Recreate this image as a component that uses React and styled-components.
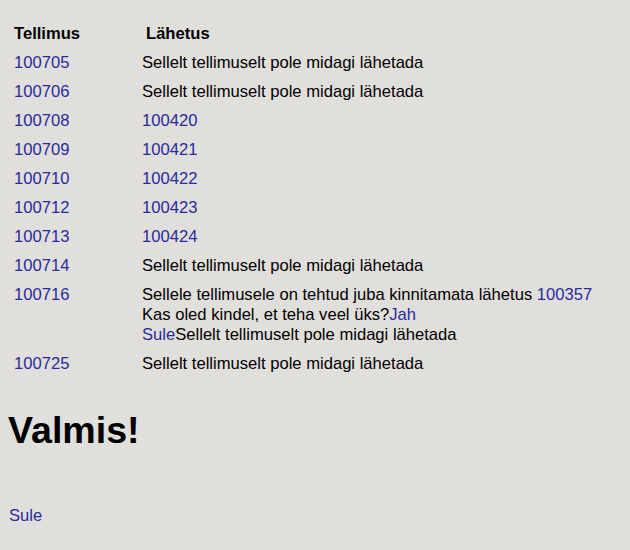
import styled, { createGlobalStyle } from 'styled-components';

const GlobalStyle = createGlobalStyle`
	body {
		margin: 0;
		background: #e0dfdc;
		font-family: 'Liberation Sans', Arial, sans-serif;
		font-size: 16.6px;
		color: #000;
	}
`;

const rows = [
	{ id: '100705', text: 'Sellelt tellimuselt pole midagi lähetada' },
	{ id: '100706', text: 'Sellelt tellimuselt pole midagi lähetada' },
	{ id: '100708', link: '100420' },
	{ id: '100709', link: '100421' },
	{ id: '100710', link: '100422' },
	{ id: '100712', link: '100423' },
	{ id: '100713', link: '100424' },
	{ id: '100714', text: 'Sellelt tellimuselt pole midagi lähetada' },
	{ id: '100716', confirm: true },
	{ id: '100725', text: 'Sellelt tellimuselt pole midagi lähetada' },
];

const App = () => {
	return (
		<Page>
			<GlobalStyle />
			<Table>
				<thead>
					<tr>
						<Th>Tellimus</Th>
						<Th $shift>Lähetus</Th>
					</tr>
				</thead>
				<tbody>
					{rows.map((r) => (
						<tr key={r.id}>
							<Td $first>
								<Link href="#">{r.id}</Link>
							</Td>
							<Td>
								{r.link && <Link href="#">{r.link}</Link>}
								{r.text}
								{r.confirm && (
									<>
										Sellele tellimusele on tehtud juba kinnitamata lähetus{' '}
										<Link href="#">100357</Link>
										<br />
										Kas oled kindel, et teha veel üks?<Link href="#">Jah</Link>
										<br />
										<Link href="#">Sule</Link>Sellelt tellimuselt pole midagi lähetada
									</>
								)}
							</Td>
						</tr>
					))}
				</tbody>
			</Table>
			<Title>Valmis!</Title>
			<Footer>
				<Link href="#">Sule</Link>
			</Footer>
		</Page>
	);
};

const Page = styled.div`
	padding: 19px 8px 0;
`;

const Table = styled.table`
	border-collapse: separate;
	border-spacing: 0 1px;
`;

const Th = styled.th`
	text-align: left;
	font-weight: bold;
	line-height: 20px;
	padding: 4px 6px 4px ${(p) => (p.$shift ? '10px' : '6px')};
`;

const Td = styled.td`
	vertical-align: top;
	line-height: 20px;
	padding: 4px 6px;
	width: ${(p) => (p.$first ? '116px' : 'auto')};
`;

const Link = styled.a`
	color: #2a2a9c;
	text-decoration: none;
`;

const Title = styled.h1`
	font-size: 37.6px;
	font-weight: bold;
	margin: 29px 0 0;
	line-height: 44px;
`;

const Footer = styled.div`
	margin-top: 54px;
	padding-left: 1px;
`;

export default App;
